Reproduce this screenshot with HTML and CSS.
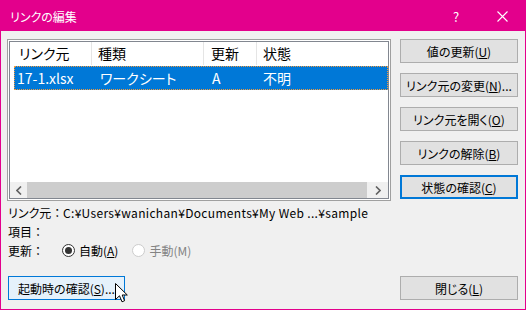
FILE: index.html
```html
<!DOCTYPE html>
<html lang="ja">
<head>
  <meta charset="UTF-8">
  <title>リンクの編集</title>
  <link rel="stylesheet" href="styles.css">
</head>
<body>

  <div class="window">
    <div class="titlebar">
      <span class="title">リンクの編集</span>
      <span class="caption help">?</span>
      <span class="caption close">
        <svg width="11" height="11" viewBox="0 0 11 11"><path d="M0.5 0.5 L10.5 10.5 M10.5 0.5 L0.5 10.5" stroke="#fff" stroke-width="1.1" fill="none"/></svg>
      </span>
    </div>

    <div class="content">
      <div class="main">
        <div class="left">
          <div class="listbox">
            <div class="listview">
              <div class="header">
                <div class="hcell h1">リンク元</div>
                <div class="hcell h2">種類</div>
                <div class="hcell h3">更新</div>
                <div class="hcell h4">状態</div>
              </div>
              <div class="row selected">
                <div class="cell c1">17-1.xlsx</div>
                <div class="cell c2">ワークシート</div>
                <div class="cell c3">A</div>
                <div class="cell c4">不明</div>
              </div>
              <div class="empty"></div>
              <div class="hscroll">
                <div class="arrow-btn left-btn">
                  <svg width="6" height="9" viewBox="0 0 6 9"><path d="M5 0.5 L1 4.5 L5 8.5" stroke="#606060" stroke-width="1.6" fill="none"/></svg>
                </div>
                <div class="thumb"></div>
                <div class="arrow-btn right-btn">
                  <svg width="6" height="9" viewBox="0 0 6 9"><path d="M1 0.5 L5 4.5 L1 8.5" stroke="#606060" stroke-width="1.6" fill="none"/></svg>
                </div>
              </div>
            </div>
          </div>

          <div class="info">
            <div class="line"><span class="label source">リンク元<span class="colon">：</span></span><span class="path">C:¥Users¥wanichan¥Documents¥My Web ...¥sample</span></div>
            <div class="line"><span class="label">項目<span class="colon">：</span></span></div>
            <div class="line">
              <span class="label update">更新<span class="colon">：</span></span>
              <span class="radio checked"><span class="dot"></span></span>
              <span>自動(<u>A</u>)</span>
              <span class="radio disabled second"></span>
              <span class="disabled-text">手動(M)</span>
            </div>
          </div>
        </div>

        <div class="side">
          <button class="btn">値の更新(<u>U</u>)</button>
          <button class="btn">リンク元の変更(<u>N</u>)...</button>
          <button class="btn">リンク元を開く(<u>O</u>)</button>
          <button class="btn">リンクの解除(<u>B</u>)</button>
          <button class="btn focus">状態の確認(<u>C</u>)</button>
        </div>
      </div>

      <div class="footer">
        <button class="btn hover startup">起動時の確認(<u>S</u>)...</button>
        <button class="btn close-btn">閉じる(<u>L</u>)</button>
      </div>
    </div>

    <svg class="cursor" width="13" height="20" viewBox="0 0 13 20">
      <path d="M0.5 0.5 V16.5 L4.5 12.8 L7 18.8 L9.6 17.7 L7.2 12 H12.3 Z" fill="#fff" stroke="#000" stroke-width="1" stroke-linejoin="miter"/>
    </svg>
  </div>

</body>
</html>
```

FILE: styles.css
```css
body {
  margin: 0;
  font-family: "Noto Sans CJK JP", sans-serif;
  font-size: 12px;
  font-feature-settings: "palt";
  color: #000;
}

.window {
  position: relative;
  width: 526px;
  height: 310px;
  box-sizing: border-box;
  border: 1px solid #e3008c;
  background: #f0f0f0;
  display: flex;
  flex-direction: column;
}

.titlebar {
  height: 30px;
  background: #e3008c;
  color: #fff;
  display: flex;
  align-items: center;
}

.title {
  margin-left: 9px;
  flex: 1;
}

.caption {
  width: 46px;
  height: 30px;
  display: flex;
  align-items: center;
  justify-content: center;
}

.help {
  font-size: 13px;
}

.content {
  flex: 1;
  display: flex;
  flex-direction: column;
  padding: 8px 7px 9px 6px;
}

.main {
  display: flex;
  gap: 9px;
}

.left {
  width: 384px;
}

/* list view */
.listbox {
  height: 162px;
  box-sizing: border-box;
  border: 1px solid #a0a0a0;
  padding: 1px;
  background: #fff;
}

.listview {
  height: 100%;
  box-sizing: border-box;
  border: 1px solid #828790;
  display: flex;
  flex-direction: column;
  font-size: 14px;
}

.header {
  display: flex;
  height: 23px;
  line-height: 23px;
}

.hcell {
  box-sizing: border-box;
  border-right: 1px solid #e5e5e5;
  white-space: nowrap;
}

.h1 { width: 82px; padding-left: 9px; }
.h2 { width: 112px; padding-left: 6px; }
.h3 { width: 53px; padding-left: 7px; }
.h4 { flex: 1; padding-left: 6px; border-right: none; }

.row {
  display: flex;
  height: 24px;
  line-height: 22px;
  margin: 1px 0 0 4px;
  box-sizing: border-box;
}

.row.selected {
  background: #0078d7;
  color: #fff;
  border: 1px dotted #f39a3c;
}

.cell {
  box-sizing: border-box;
  white-space: nowrap;
}

.c1 { width: 77px; padding-left: 2px; }
.c2 { width: 112px; padding-left: 8px; }
.c3 { width: 53px; padding-left: 8px; }
.c4 { flex: 1; padding-left: 6px; }

.empty {
  flex: 1;
}

.hscroll {
  height: 16px;
  display: flex;
  background: #f0f0f0;
}

.arrow-btn {
  display: flex;
  align-items: center;
  justify-content: center;
}

.left-btn {
  width: 17px;
}

.right-btn {
  flex: 1;
}

.thumb {
  width: 340px;
  background: #cdcdcd;
}

/* info lines */
.info {
  margin-top: 2px;
}

.line {
  height: 19px;
  line-height: 19px;
  display: flex;
  align-items: center;
  white-space: nowrap;
}

.label {
  display: inline-block;
  padding-left: 1px;
}

.colon {
  font-feature-settings: normal;
}

.label.source {
  width: 55px;
}

.label.update {
  width: 54px;
}

.path {
  letter-spacing: 0.32px;
}

.radio {
  width: 13px;
  height: 13px;
  box-sizing: border-box;
  border: 1px solid #333;
  border-radius: 50%;
  background: #fff;
  display: flex;
  align-items: center;
  justify-content: center;
  margin-right: 4px;
}

.radio .dot {
  width: 7px;
  height: 7px;
  border-radius: 50%;
  background: #333;
}

.radio.disabled {
  border-color: #cccccc;
}

.radio.second {
  margin-left: 14px;
}

.disabled-text {
  color: #838383;
}

/* buttons */
.side {
  width: 118px;
  display: flex;
  flex-direction: column;
  gap: 10px;
}

.btn {
  height: 24px;
  box-sizing: border-box;
  border: 1px solid #adadad;
  background: #e1e1e1;
  font-family: inherit;
  font-size: 12px;
  font-feature-settings: "palt";
  color: #000;
  padding: 0;
  display: flex;
  align-items: center;
  justify-content: center;
  white-space: nowrap;
}

.btn.focus {
  border: 2px solid #0078d7;
}

.btn.hover {
  background: #e5f1fb;
  border-color: #0078d7;
}

.footer {
  margin-top: auto;
  display: flex;
  justify-content: space-between;
  padding-left: 1px;
}

.startup {
  width: 117px;
}

.close-btn {
  width: 118px;
}

.cursor {
  position: absolute;
  left: 114px;
  top: 282px;
}
```
